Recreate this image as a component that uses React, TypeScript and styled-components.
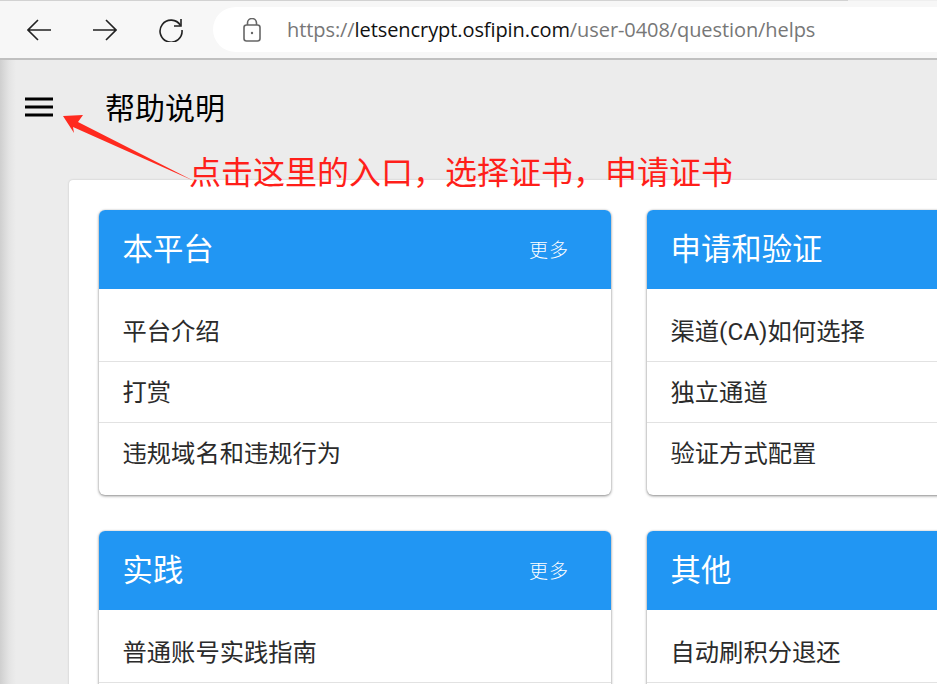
import styled, { createGlobalStyle } from "styled-components";

const cjk = `Roboto, "Noto Sans CJK SC", "Liberation Sans", sans-serif`;

const GlobalStyle = createGlobalStyle`
  html, body {
    margin: 0;
    width: 937px;
    height: 684px;
    overflow: hidden;
    background: #ececec;
    font-family: ${cjk};
  }
`;

const Page = styled.div`
  position: relative;
  width: 937px;
  height: 684px;
  overflow: hidden;
  display: flex;
  flex-direction: column;
`;

const TabEdge = styled.div`
  flex: none;
  height: 1px;
  background: linear-gradient(to right, #d2d2d2 848px, #efefef 848px);
`;

const BrowserBar = styled.div`
  flex: none;
  height: 57px;
  display: flex;
  align-items: center;
  padding-left: 27px;
  background: #f7f7f7;
  border-bottom: 2px solid #c0c0c0;
`;

const NavIcon = styled.svg<{ $gap?: number }>`
  flex: none;
  width: 24px;
  height: 24px;
  margin-right: ${(p) => p.$gap ?? 42}px;
  fill: none;
  stroke: #222;
  stroke-width: 1.6;
`;

const UrlPill = styled.div`
  flex: 1;
  height: 45px;
  display: flex;
  align-items: center;
  padding-left: 30px;
  background: #fff;
  border-radius: 23px 0 0 23px;
`;

const LockIcon = styled.svg`
  flex: none;
  width: 18px;
  height: 24px;
  margin-right: 26px;
  fill: none;
  stroke: #666;
  stroke-width: 1.6;
`;

const UrlText = styled.div`
  font: 20px "Open Sans", sans-serif;
  color: #777;
  white-space: nowrap;
  letter-spacing: -0.08px;
`;

const UrlHost = styled.span`
  color: #111;
`;

const Main = styled.div`
  flex: 1;
  min-height: 0;
  background: linear-gradient(to right, #cfcfcf 0, #e4e4e4 9px, #ececec 16px);
`;

const TopBar = styled.div`
  height: 120px;
  display: flex;
  align-items: center;
  padding: 0 0 27px 25px;
  box-sizing: border-box;
`;

const MenuIcon = styled.svg`
  flex: none;
  width: 28px;
  height: 20px;
  margin-right: 52px;
`;

const PageTitle = styled.h1`
  margin: 4px 0 0;
  font-size: 30px;
  font-weight: 400;
  line-height: 40px;
  color: #000;
`;

const Sheet = styled.div`
  margin-left: 69px;
  height: 600px;
  padding: 30px;
  background: #fff;
  border-radius: 4px 0 0 0;
  box-shadow: 0 0 2px rgba(0, 0, 0, 0.22);
`;

const CardGrid = styled.div`
  display: grid;
  grid-template-columns: 512px 512px;
  gap: 36px;
`;

const Card = styled.section`
  border-radius: 6px;
  background: #fff;
  box-shadow: 0 1px 3px rgba(0, 0, 0, 0.45), 0 0 2px rgba(0, 0, 0, 0.12);
  overflow: hidden;
  height: 285px;
`;

const CardHeader = styled.header`
  height: 79px;
  display: flex;
  align-items: center;
  justify-content: space-between;
  padding: 0 42px 6px 24px;
  box-sizing: border-box;
  background: #2196f3;
  color: #fff;
`;

const CardTitle = styled.h2`
  margin: 6px 0 0 -0.5px;
  font-size: 30.4px;
  font-weight: 400;
  line-height: 40px;
`;

const MoreLink = styled.span`
  font-size: 19px;
  font-weight: 300;
  letter-spacing: 1px;
  margin-top: 4px;
`;

const ItemList = styled.ul`
  list-style: none;
  margin: 0;
  padding: 12px 0;
`;

const Item = styled.li`
  height: 61px;
  box-sizing: border-box;
  padding: 0 24px 4px 23.5px;
  display: flex;
  align-items: center;
  font-size: 24.3px;
  color: #2b2b2b;
  border-bottom: 1px solid #e2e2e2;

  &:last-child {
    border-bottom: none;
  }
`;

const ArrowMark = styled.svg`
  position: absolute;
  left: 0;
  top: 0;
  width: 937px;
  height: 684px;
  pointer-events: none;
`;

const Note = styled.div`
  position: absolute;
  left: 189px;
  top: 151px;
  font-size: 32px;
  font-weight: 400;
  line-height: 44px;
  color: #ff1f1a;
  white-space: nowrap;
`;

const cards = [
  { title: "本平台", more: true, items: ["平台介绍", "打赏", "违规域名和违规行为"] },
  { title: "申请和验证", more: false, items: ["渠道(CA)如何选择", "独立通道", "验证方式配置"] },
  { title: "实践", more: true, items: ["普通账号实践指南", "", ""] },
  { title: "其他", more: false, items: ["自动刷积分退还", "", ""] },
];

export default function App() {
  return (
    <Page>
      <GlobalStyle />
      <TabEdge />
      <BrowserBar>
        <NavIcon viewBox="0 0 24 24">
          <path d="M24 12H1M11 2 1 12l10 10" />
        </NavIcon>
        <NavIcon viewBox="0 0 24 24">
          <path d="M0 12h23M13 2l10 10-10 10" />
        </NavIcon>
        <NavIcon viewBox="0 0 24 24" $gap={30}>
          <path d="M21.5 7.5A11 11 0 1 0 23 12" />
          <path d="M22 1v7h-7" />
        </NavIcon>
        <UrlPill>
          <LockIcon viewBox="0 0 18 24">
            <rect x="1" y="7" width="16" height="16" rx="2.5" />
            <path d="M4.5 7V5a4.5 4.5 0 0 1 9 0v2" />
            <circle cx="9" cy="15" r="1.2" fill="#666" stroke="none" />
          </LockIcon>
          <UrlText>
            https://<UrlHost>letsencrypt.osfipin.com</UrlHost>/user-0408/question/helps
          </UrlText>
        </UrlPill>
      </BrowserBar>
      <Main>
        <TopBar>
          <MenuIcon viewBox="0 0 28 20">
            <path d="M0 2h28M0 10h28M0 18h28" stroke="#000" strokeWidth="3" />
          </MenuIcon>
          <PageTitle>帮助说明</PageTitle>
        </TopBar>
        <Sheet>
          <CardGrid>
            {cards.map((card) => (
              <Card key={card.title}>
                <CardHeader>
                  <CardTitle>{card.title}</CardTitle>
                  {card.more && <MoreLink>更多</MoreLink>}
                </CardHeader>
                <ItemList>
                  {card.items.map((item, i) => (
                    <Item key={i}>{item}</Item>
                  ))}
                </ItemList>
              </Card>
            ))}
          </CardGrid>
        </Sheet>
      </Main>
      <ArrowMark viewBox="0 0 937 684">
        <polygon points="63,116 83,115 78,122 194,181 73,127 74,133" fill="#ff2a1f" />
      </ArrowMark>
      <Note>点击这里的入口，选择证书，申请证书</Note>
    </Page>
  );
}
